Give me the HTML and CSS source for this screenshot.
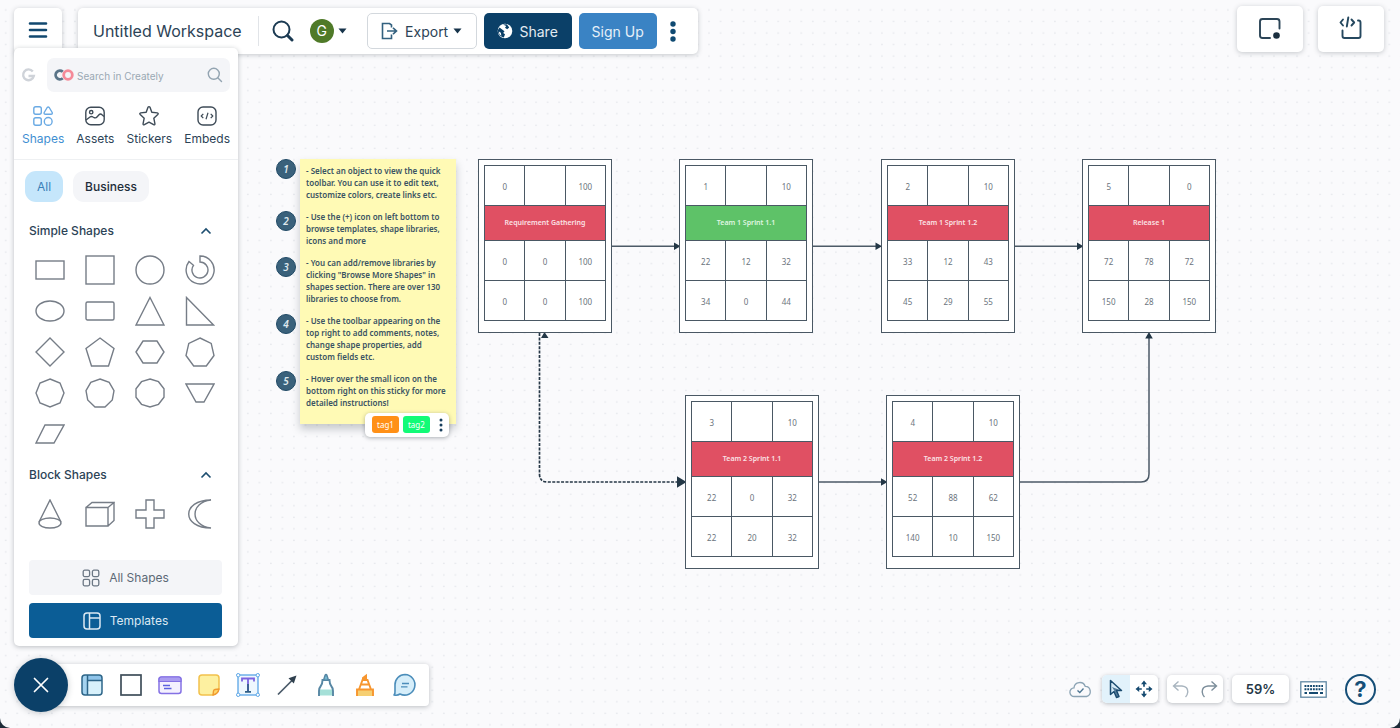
FILE: index.html
```html
<!DOCTYPE html>
<html lang="en">
<head>
<meta charset="utf-8">
<title>Untitled Workspace</title>
<meta name="viewport" content="width=device-width, initial-scale=1">
<link rel="stylesheet" href="styles.css">
</head>
<body>
<div class="app">
  <main class="canvas" aria-label="Canvas">
    <svg class="layer" aria-hidden="true">
      <defs>
        <pattern id="dots" width="11.53" height="11.53" patternUnits="userSpaceOnUse"><circle cx="5.7" cy="10" r="0.8" fill="#e3e5ea"/></pattern>
      </defs>
      <rect width="100%" height="100%" fill="url(#dots)"/>
      <g fill="none" stroke="#4c5a67" stroke-width="1.5">
        <path d="M612 246.2H676M813 246.2H877M1014 246.2H1078M819 482H883"/>
        <path d="M1020 482H1141Q1149 482 1149 474V338"/>
        <path d="M539.5 333V474Q539.5 482 547.5 482H678" stroke="#263746" stroke-width="1.700" stroke-dasharray="3 1.4"/>
      </g>
      <g fill="#233746">
        <path d="M674 242.500L680.500 246.200L674 250ZM875.500 242.500L882 246.200L875.500 250ZM1077 242.500L1083.500 246.200L1077 250ZM881 478.200L887.500 482L881 485.800Z"/>
        <path d="M677 476.300L686.500 482L677 487.700ZM541 338L544.500 332L548.500 338ZM1145.200 338.500L1149 332L1152.800 338.500Z"/>
      </g>
    </svg>

    <section class="sticky">
      <p>- Select an object to view the quick<br>toolbar. You can use it to edit text,<br>customize colors, create links etc.</p>
      <p>- Use the (+) icon on left bottom to<br>browse templates, shape libraries,<br>icons and more</p>
      <p>- You can add/remove libraries by<br>clicking "Browse More Shapes" in<br>shapes section. There are over 130<br>libraries to choose from.</p>
      <p>- Use the toolbar appearing on the<br>top right to add comments, notes,<br>change shape properties, add<br>custom fields etc.</p>
      <p>- Hover over the small icon on the<br>bottom right on this sticky for more<br>detailed instructions!</p>
    </section>
    <span class="badge badge-1">1</span>
    <span class="badge badge-2">2</span>
    <span class="badge badge-3">3</span>
    <span class="badge badge-4">4</span>
    <span class="badge badge-5">5</span>
    <div class="tags">
      <span class="tag tag-orange">tag1</span><span class="tag tag-green">tag2</span>
      <button class="tag-more" aria-label="More tags"><svg width="4" height="14" viewBox="0 0 4 14" fill="#173e5c"><circle cx="2" cy="2" r="1.5"/><circle cx="2" cy="7" r="1.5"/><circle cx="2" cy="12" r="1.5"/></svg></button>
    </div>

    <div class="node node-req"><table class="task">
      <tr><td>0</td><td></td><td>100</td></tr>
      <tr><th colspan="3">Requirement Gathering</th></tr>
      <tr><td>0</td><td>0</td><td>100</td></tr>
      <tr><td>0</td><td>0</td><td>100</td></tr>
    </table></div>
    <div class="node node-t11"><table class="task task-done">
      <tr><td>1</td><td></td><td>10</td></tr>
      <tr><th colspan="3">Team 1 Sprint 1.1</th></tr>
      <tr><td>22</td><td>12</td><td>32</td></tr>
      <tr><td>34</td><td>0</td><td>44</td></tr>
    </table></div>
    <div class="node node-t12"><table class="task">
      <tr><td>2</td><td></td><td>10</td></tr>
      <tr><th colspan="3">Team 1 Sprint 1.2</th></tr>
      <tr><td>33</td><td>12</td><td>43</td></tr>
      <tr><td>45</td><td>29</td><td>55</td></tr>
    </table></div>
    <div class="node node-rel"><table class="task">
      <tr><td>5</td><td></td><td>0</td></tr>
      <tr><th colspan="3">Release 1</th></tr>
      <tr><td>72</td><td>78</td><td>72</td></tr>
      <tr><td>150</td><td>28</td><td>150</td></tr>
    </table></div>
    <div class="node node-t21"><table class="task">
      <tr><td>3</td><td></td><td>10</td></tr>
      <tr><th colspan="3">Team 2 Sprint 1.1</th></tr>
      <tr><td>22</td><td>0</td><td>32</td></tr>
      <tr><td>22</td><td>20</td><td>32</td></tr>
    </table></div>
    <div class="node node-t22"><table class="task">
      <tr><td>4</td><td></td><td>10</td></tr>
      <tr><th colspan="3">Team 2 Sprint 1.2</th></tr>
      <tr><td>52</td><td>88</td><td>62</td></tr>
      <tr><td>140</td><td>10</td><td>150</td></tr>
    </table></div>
  </main>

  <header class="top">
    <div class="top-left">
      <button class="menu" aria-label="Menu"><svg width="20" height="18" viewBox="0 0 20 18" stroke="#11486f" stroke-width="2.600" stroke-linecap="round"><path d="M2 2.500H18M2 9H18M2 15.500H18"/></svg></button>
      <div class="bar">
        <h1 class="title">Untitled Workspace</h1>
        <span class="rule"></span>
        <button class="plain find" aria-label="Search"><svg width="22" height="22" viewBox="0 0 22 22" fill="none" stroke="#1b3a52"><circle cx="9.500" cy="9.500" r="8" stroke-width="2"/><path d="M15.500 15.500L20 20" stroke-width="3" stroke-linecap="round"/></svg></button>
        <button class="plain user" aria-label="Account"><span class="avatar">G</span><svg width="9" height="6" viewBox="0 0 9 6"><path d="M.5 .5H8.500L4.500 5.500Z" fill="#16334a"/></svg></button>
        <button class="btn btn-export"><svg width="17" height="18" viewBox="0 0 17 18" fill="none" stroke="#33617f" stroke-width="1.600"><path d="M10.500 5.500V3L8.500 1.500H1.500V16.500H10.500V12.500M6 9H15.500M12 5.800L15.500 9L12 12.200"/></svg>Export<svg class="caret" width="9" height="6" viewBox="0 0 9 6"><path d="M.5 .5H8.500L4.500 5.500Z" fill="#16334a"/></svg></button>
        <button class="btn btn-share"><svg width="16" height="16" viewBox="0 0 16 16"><circle cx="8" cy="8" r="7.300" fill="#fff"/><path d="M2.500 4.500L7.500 8.200L6.200 10L8 11.200L6.800 14.400C3.200 13.500 .8 11.500 .9 7Z" fill="#0b4068"/><path d="M1.800 8.600L3.800 9.800L4.400 12.800L2.400 11.200Z" fill="#fff"/><path d="M6 1.500L9.200 3L8 4.800L10.200 6.200L12.200 4.600L10.800 2.600L9.500 1.200Z" fill="#0b4068"/></svg>Share</button>
        <button class="btn btn-sign">Sign Up</button>
        <button class="plain more" aria-label="More"><svg width="6" height="21" viewBox="0 0 6 21" fill="#0f4a72"><circle cx="3" cy="3" r="2.700"/><circle cx="3" cy="10.500" r="2.700"/><circle cx="3" cy="18" r="2.700"/></svg></button>
      </div>
    </div>
    <div class="top-right">
      <button class="tile" aria-label="Format panel"><svg width="24" height="24" viewBox="0 0 24 24" fill="none" stroke="#2c4557" stroke-width="1.900" stroke-linecap="round"><path d="M12 21H4.500Q2 21 2 18.500V4.500Q2 2 4.500 2H19Q21.500 2 21.500 4.500V11.500"/><circle cx="18.500" cy="18.500" r="3.300" fill="#1c2f3f" stroke="none"/></svg></button>
      <button class="tile" aria-label="Code panel"><svg width="26" height="26" viewBox="0 0 26 26" fill="none" stroke="#25485f" stroke-width="1.900" stroke-linecap="round" stroke-linejoin="round"><path d="M4.500 14.500V20Q4.500 22 6.500 22H20.500Q22.500 22 22.500 20V6.500Q22.500 4.500 20.500 4.500H20"/><path d="M5 3.500L2.500 6.500L5 9.500M8.800 10.500L10.300 1.500M13.500 3.500L16.200 6.500L13.500 9.500"/></svg></button>
    </div>
  </header>

  <aside class="panel">
    <div class="search-row">
      <svg width="15" height="15" viewBox="0 0 15 15" fill="none" stroke="#cfd3d9" stroke-width="2.400"><path d="M11.800 3.500A5.400 5.400 0 1 0 12.800 8H7.500"/></svg>
      <div class="search">
        <svg width="20" height="12" viewBox="0 0 20 12" fill="none" stroke-width="2.800"><path d="M8.800 2.800A4.300 4.300 0 1 0 8.800 9.200" stroke="#5a7488"/><circle cx="14" cy="6" r="4.300" stroke="#f58a98"/></svg>
        <input class="search-input" type="text" placeholder="Search in Creately" aria-label="Search in Creately">
        <svg width="16" height="16" viewBox="0 0 16 16" fill="none" stroke="#93a4b1" stroke-width="1.400" stroke-linecap="round"><circle cx="6.800" cy="6.800" r="5.500"/><path d="M11 11L14.500 14.500"/></svg>
      </div>
    </div>
    <nav class="tabs">
      <button class="tab tab-on"><svg width="22" height="22" viewBox="0 0 22 22" fill="none" stroke="#6aaae4" stroke-width="1.400" stroke-linejoin="round"><rect x="1.800" y="1.800" width="7.500" height="7.500" rx="2"/><path d="M15.200 2.500Q16.200 1.500 17.200 2.500L20.200 7.500Q20.700 9.300 19 9.300H13.500Q11.700 9.300 12.200 7.500Z"/><rect x="1.800" y="12.700" width="7.500" height="7.500" rx="2"/><circle cx="16.200" cy="16.400" r="3.900"/></svg>Shapes</button>
      <button class="tab"><svg width="22" height="22" viewBox="0 0 22 22" fill="none" stroke="#3e4b57" stroke-width="1.400" stroke-linejoin="round"><rect x="1.800" y="2.200" width="18.400" height="17.600" rx="5"/><circle cx="7.200" cy="7.200" r="1.700"/><path d="M2 15L6 12Q7.500 11 9 12L10.500 12.800Q12 13.200 13.200 11.800L15 9.800Q16.500 8.300 18 9.800L20 11.500"/></svg>Assets</button>
      <button class="tab"><svg width="22" height="22" viewBox="0 0 22 22" fill="none" stroke="#3e4b57" stroke-width="1.400" stroke-linejoin="round"><path d="M10 2.300Q11 1 12 2.300L13.800 7.200L19.300 7.900Q20.800 8.300 19.800 9.500L15.800 13.200L16.900 18.700Q17 20.300 15.600 19.700L11 17.200L6.400 19.700Q5 20.300 5.100 18.700L6.200 13.200L2.200 9.500Q1.200 8.300 2.700 7.900L8.200 7.200Z"/></svg>Stickers</button>
      <button class="tab"><svg width="22" height="22" viewBox="0 0 22 22" fill="none" stroke="#3e4b57" stroke-width="1.400" stroke-linejoin="round"><rect x="2" y="2" width="18" height="18" rx="5"/><path d="M7.300 8.800L5.200 11L7.300 13.200M14.700 8.800L16.800 11L14.700 13.200M12 7.800L10 14.200" stroke-width="1.200"/></svg>Embeds</button>
    </nav>
    <div class="chips">
      <button class="chip chip-on">All</button>
      <button class="chip">Business</button>
    </div>
    <section class="group group-first">
      <button class="group-head">Simple Shapes<svg width="12" height="8" viewBox="0 0 12 8" fill="none" stroke="#1d4e70" stroke-width="1.600"><path d="M1.500 6.500L6 2L10.500 6.500"/></svg></button>
      <div class="shapes">
        <button class="shape" aria-label="Rectangle"><svg viewBox="0 0 30 30"><rect x="1" y="6" width="28" height="18"/></svg></button>
        <button class="shape" aria-label="Square"><svg viewBox="0 0 30 30"><rect x="1" y="1" width="28" height="28"/></svg></button>
        <button class="shape" aria-label="Circle"><svg viewBox="0 0 30 30"><circle cx="15" cy="15" r="14"/></svg></button>
        <button class="shape" aria-label="Arc"><svg viewBox="0 0 30 30"><path d="M15 1A14 14 0 1 1 4 6.500L8.500 10.300A8 8 0 1 0 15 7Z"/></svg></button>
        <button class="shape" aria-label="Ellipse"><svg viewBox="0 0 30 30"><ellipse cx="15" cy="15" rx="14" ry="10"/></svg></button>
        <button class="shape" aria-label="Rounded rectangle"><svg viewBox="0 0 30 30"><rect x="1" y="6" width="28" height="18" rx="1.500"/></svg></button>
        <button class="shape" aria-label="Triangle"><svg viewBox="0 0 30 30"><path d="M15 1.500L29 29H1Z"/></svg></button>
        <button class="shape" aria-label="Right triangle"><svg viewBox="0 0 30 30"><path d="M1.500 1.500L28.500 29H1.500Z"/></svg></button>
        <button class="shape" aria-label="Diamond"><svg viewBox="0 0 30 30"><path d="M15 1L29 15L15 29L1 15Z"/></svg></button>
        <button class="shape" aria-label="Pentagon"><svg viewBox="0 0 30 30"><path d="M15 1L29 11.500L23.500 29H6.500L1 11.500Z"/></svg></button>
        <button class="shape" aria-label="Hexagon"><svg viewBox="0 0 30 30"><path d="M1 15L8 4H22L29 15L22 26H8Z"/></svg></button>
        <button class="shape" aria-label="Heptagon"><svg viewBox="0 0 30 30"><path d="M15 1L26.200 6.400L29 18.500L21.300 29H8.700L1 18.500L3.800 6.400Z"/></svg></button>
        <button class="shape" aria-label="Octagon"><svg viewBox="0 0 30 30"><path d="M15 1L25 5L29 15L25 25L15 29L5 25L1 15L5 5Z"/></svg></button>
        <button class="shape" aria-label="Nonagon"><svg viewBox="0 0 30 30"><path d="M15 1L24.200 4.300L29 12.700L27.300 22L20 29H10L2.700 22L1 12.700L5.800 4.300Z"/></svg></button>
        <button class="shape" aria-label="Decagon"><svg viewBox="0 0 30 30"><path d="M15 1L23.500 3.700L29 10.700V19.300L23.500 26.300L15 29L6.500 26.300L1 19.300V10.700L6.500 3.700Z"/></svg></button>
        <button class="shape" aria-label="Trapezoid"><svg viewBox="0 0 30 30"><path d="M1 6H29L19 24H11Z"/></svg></button>
        <button class="shape" aria-label="Parallelogram"><svg viewBox="0 0 30 30"><path d="M10 6H29L19 24H1Z"/></svg></button>
      </div>
    </section>
    <section class="group">
      <button class="group-head">Block Shapes<svg width="12" height="8" viewBox="0 0 12 8" fill="none" stroke="#1d4e70" stroke-width="1.600"><path d="M1.500 6.500L6 2L10.500 6.500"/></svg></button>
      <div class="shapes">
        <button class="shape" aria-label="Cone"><svg viewBox="0 0 30 30"><path d="M4 23L15 1L26 23"/><ellipse cx="15" cy="24" rx="11" ry="5"/></svg></button>
        <button class="shape" aria-label="Cube"><svg viewBox="0 0 30 30"><path d="M1 8.500H23V27H1ZM1 8.500L7 3.500H29L23 8.500M29 3.500V21.500L23 27"/></svg></button>
        <button class="shape" aria-label="Cross"><svg viewBox="0 0 30 30"><path d="M11 1H19V11H29V19H19V29H11V19H1V11H11Z"/></svg></button>
        <button class="shape" aria-label="Moon"><svg viewBox="0 0 30 30"><path d="M26 1C-3.700 1 -3.700 29 26 29C4.700 27 4.700 3 26 1Z"/></svg></button>
      </div>
    </section>
    <div class="actions">
      <button class="wide wide-all"><svg width="18" height="18" viewBox="0 0 18 18" fill="none" stroke="#6b7784" stroke-width="1.300"><rect x="1.200" y="1.200" width="6.400" height="6.400" rx="1.500"/><rect x="10.400" y="1.200" width="6.400" height="6.400" rx="1.500"/><rect x="1.200" y="10.400" width="6.400" height="6.400" rx="1.500"/><rect x="10.400" y="10.400" width="6.400" height="6.400" rx="1.500"/></svg>All Shapes</button>
      <button class="wide wide-templates"><svg width="18" height="18" viewBox="0 0 18 18" fill="none" stroke="#dce9f3" stroke-width="1.500"><rect x="1" y="1" width="16" height="16" rx="3"/><path d="M6.500 1V17M6.500 6H17"/></svg>Templates</button>
    </div>
  </aside>

  <footer class="bottom">
    <div class="dock">
      <button class="close" aria-label="Close"><svg width="16" height="16" viewBox="0 0 16 16" stroke="#fff" stroke-width="1.700" stroke-linecap="round"><path d="M1.500 1.500L14.500 14.500M14.500 1.500L1.500 14.500"/></svg></button>
      <div class="tools">
        <button class="tool" aria-label="Templates"><svg width="24" height="24" viewBox="0 0 24 24"><rect x="2" y="2" width="20" height="20" rx="3" fill="#d8f1fb"/><path d="M5 2H7.500V22H5Q2 22 2 19V5Q2 2 5 2Z" fill="#a5d3ef"/><path d="M7.500 2H19Q22 2 22 5V7.500H7.500Z" fill="#8fc4ea"/><g fill="none" stroke="#2d6588" stroke-width="1.500"><rect x="2" y="2" width="20" height="20" rx="3"/><path d="M7.500 2V22M7.500 7.500H22"/></g></svg></button>
        <button class="tool" aria-label="Rectangle"><svg width="24" height="24" viewBox="0 0 24 24"><rect x="2" y="2" width="20" height="20" fill="#fff" stroke="#3f4e5a" stroke-width="1.700"/></svg></button>
        <button class="tool" aria-label="Card"><svg width="26" height="24" viewBox="0 0 26 24"><rect x="2" y="4" width="22" height="16.500" rx="2.500" fill="#f4f1fe" stroke="#8471e4" stroke-width="1.500"/><path d="M2 8.500V6.500Q2 4 4.500 4H21.500Q24 4 24 6.500V8.500Z" fill="#aa9cf0" stroke="#8471e4" stroke-width="1.200"/><path d="M6 12.500H13M7 15.500H14.500" stroke="#5b62e0" stroke-width="1.400"/></svg></button>
        <button class="tool" aria-label="Sticky note"><svg width="24" height="24" viewBox="0 0 24 24"><path d="M5 2H19Q22 2 22 5V16L16 22H5Q2 22 2 19V5Q2 2 5 2Z" fill="#fdf0a0" stroke="#f2c14c" stroke-width="1.500"/><path d="M22 16Q21 21 16 22L16.500 18Q16.700 16.700 18 16.500Z" fill="#ffd76a" stroke="#f09a30" stroke-width="1.400" stroke-linejoin="round"/></svg></button>
        <button class="tool" aria-label="Text"><svg width="24" height="24" viewBox="0 0 24 24"><rect x="2" y="2" width="20" height="20" fill="#eef7fe" stroke="#5aa5e6" stroke-width="1.300"/><g fill="#fff" stroke="#5aa5e6"><circle cx="2.200" cy="2.200" r="1.700"/><circle cx="21.800" cy="2.200" r="1.700"/><circle cx="2.200" cy="21.800" r="1.700"/><circle cx="21.800" cy="21.800" r="1.700"/></g><path d="M6 8.500V5.500H18V8.500M12 5.500V18.500" fill="none" stroke="#7c63e0" stroke-width="1.800"/><path d="M12 11V18.500M9 18.800H15" fill="none" stroke="#2f5f86" stroke-width="1.700"/></svg></button>
        <button class="tool" aria-label="Connector"><svg width="24" height="24" viewBox="0 0 24 24"><path d="M3 21.500L17 7.500" stroke="#4a5b69" stroke-width="1.700"/><path d="M21.500 2.500L18.800 10.500L13.500 5.200Z" fill="#2f404e"/></svg></button>
        <button class="tool" aria-label="Marker"><svg width="22" height="24" viewBox="0 0 22 24"><path d="M4 16.500H18V22.500H4Z" fill="#a5e0d8"/><path d="M4 23V18Q4 15 5.800 13Q7.500 10.500 7.500 7H14.500Q14.500 10.500 16.200 13Q18 15 18 18V23M9 6.500L10.200 2.500Q11 1 11.800 2.500L13 6.500" fill="none" stroke="#5787a4" stroke-width="1.900"/><path d="M9.500 6.500L11 2L12.500 6.500Z" fill="#6fb6cf"/></svg></button>
        <button class="tool" aria-label="Highlighter"><svg width="22" height="24" viewBox="0 0 22 24"><path d="M3 16.500H19V23H3Z" fill="#f6cf72"/><path d="M3 23V16.500H19V23M5 16.500L8.500 7H13.500L17 16.500M6.800 11.500H15.200" fill="none" stroke="#f7962f" stroke-width="1.900"/><path d="M8 7.500V4.500L13 .8V7.500Z" fill="#f7962f"/></svg></button>
        <button class="tool" aria-label="Comment"><svg width="26" height="26" viewBox="0 0 26 26"><path d="M14 2.500A10.300 10.300 0 1 1 9 22Q6.500 23.800 3 23Q4.300 21.500 4 19V12.800A10 10.300 0 0 1 14 2.500Z" fill="#d6eefa" stroke="#4b8dba" stroke-width="1.600" stroke-linejoin="round"/><path d="M11 11.500H18M10 14.800H16.500" stroke="#4b8dba" stroke-width="1.300"/></svg></button>
      </div>
    </div>
    <div class="status">
      <svg class="cloud" width="23" height="17" viewBox="0 0 23 17" fill="none" stroke="#8ba3b4" stroke-width="1.300"><path d="M5.500 15.500A4.300 4.300 0 0 1 5 6.800A5.800 5.800 0 0 1 16.200 5.300A5.200 5.200 0 0 1 17.500 15.500Z"/><path d="M8.500 9.500L10.800 11.500L14.500 7.500" stroke="#4d7592"/></svg>
      <div class="pair">
        <button class="key key-on" aria-label="Select"><svg width="16" height="20" viewBox="0 0 16 20"><path d="M2.500 1.500V15.500L6 12.500L8.500 18.500L11 17.500L8.500 11.500H13.500Z" fill="#d7ecf8" stroke="#1c4c70" stroke-width="1.500" stroke-linejoin="round"/><path d="M6.500 12L8.500 18.500L11 17.500L8.500 11.500H13L4 8Z" fill="#1c4c70" opacity=".7"/></svg></button>
        <button class="key" aria-label="Pan"><svg width="18" height="18" viewBox="0 0 18 18" fill="#164a70" stroke="#164a70"><path d="M9 .5L12 4.200H6ZM9 17.500L12 13.800H6ZM.5 9L4.200 6V12ZM17.500 9L13.800 6V12Z" stroke="none"/><path d="M9 3V6.800M9 11.200V15M3 9H6.800M11.200 9H15" stroke-width="1.700"/></svg></button>
      </div>
      <div class="pair">
        <button class="key" aria-label="Undo"><svg width="18" height="18" viewBox="0 0 18 18" fill="none" stroke="#a9b5bf" stroke-width="1.400"><path d="M6.500 1.500L1.500 6L6.500 10.500M1.500 6H10Q16 6.500 15.800 12Q15.500 15 13.500 17"/></svg></button>
        <button class="key" aria-label="Redo"><svg width="18" height="18" viewBox="0 0 18 18" fill="none" stroke="#7d8e9b" stroke-width="1.400"><path d="M11.500 1.500L16.500 6L11.500 10.500M16.500 6H8Q2 6.500 2.200 12Q2.500 15 4.500 17"/></svg></button>
      </div>
      <button class="zoom">59%</button>
      <button class="plain keyboard" aria-label="Keyboard shortcuts"><svg width="27" height="17" viewBox="0 0 27 17"><rect x=".8" y=".8" width="25.400" height="15.400" fill="#fff" stroke="#5f87a3" stroke-width="1.300"/><path d="M4.500 5H23M4.500 8.300H23" stroke="#164a70" stroke-width="1.900" stroke-dasharray="1.900 .9"/><path d="M4.500 12H7M9 12H18M20 12H23" stroke="#164a70" stroke-width="1.900"/></svg></button>
      <button class="plain help" aria-label="Help">?</button>
    </div>
  </footer>
</div>
</body>
</html>
```
FILE: styles.css
```css
* { box-sizing: border-box; }
body {
  margin: 0;
  background: #1d2b38;
  font-family: Inter, "Liberation Sans", sans-serif;
  color: #2c4356;
}
button {
  margin: 0;
  padding: 0;
  border: 0;
  background: none;
  font: inherit;
  color: inherit;
  cursor: pointer;
}
svg { display: block; flex: none; }

.app {
  position: relative;
  display: flex;
  flex-direction: column;
  min-height: 100vh;
  overflow: hidden;
  background: #fafafc;
  border-radius: 0 0 10px 10px;
}

/* Canvas */
.canvas { position: absolute; inset: 0; font-family: "Noto Sans", sans-serif; }
.layer { position: absolute; inset: 0; width: 100%; height: 100%; }

.sticky {
  position: absolute;
  left: 300px;
  top: 159px;
  width: 156px;
  height: 265px;
  padding: 6px;
  background: #fffab5;
  box-shadow: 0 5px 8px rgba(40, 50, 60, .25);
  font-size: 8px;
  font-weight: 600;
  line-height: 12px;
  color: #3a5363;
  white-space: nowrap;
}
.sticky p { margin: 0 0 10px; }

.badge {
  position: absolute;
  left: 276px;
  width: 20px;
  height: 20px;
  border: 1px solid #214a66;
  border-radius: 50%;
  background: #3a617b;
  color: #dfe8ee;
  font-size: 10px;
  font-style: italic;
  font-weight: 600;
  line-height: 18px;
  text-align: center;
}
.badge-1 { top: 159px; }
.badge-2 { top: 211px; }
.badge-3 { top: 257px; }
.badge-4 { top: 314px; }
.badge-5 { top: 371px; }

.tags {
  position: absolute;
  left: 365px;
  top: 413px;
  display: flex;
  align-items: center;
  gap: 4px;
  padding: 3px 6px 4px 7px;
  border-radius: 5px;
  background: #fff;
  box-shadow: 0 1px 4px rgba(30, 40, 50, .35);
}
.tag {
  padding: 0 5px;
  border-radius: 3px;
  color: #fff;
  font-size: 8px;
  line-height: 17px;
}
.tag-orange { background: #ff9016; }
.tag-green { background: #12fb77; }
.tag-more { padding: 0 0 0 5px; }

.node {
  position: absolute;
  padding: 5px 5px 11px;
  border: 1px solid #4a5864;
  background: #fff;
}
.node-req { left: 478px; top: 159px; }
.node-t11 { left: 679px; top: 159px; }
.node-t12 { left: 881px; top: 159px; }
.node-rel { left: 1082px; top: 159px; }
.node-t21 { left: 685px; top: 395px; }
.node-t22 { left: 886px; top: 395px; }

.task {
  width: 122px;
  border-collapse: collapse;
  table-layout: fixed;
  font-size: 8px;
  line-height: 12px;
  color: #6b747d;
  text-align: center;
}
.task td { height: 40px; padding: 2px 0 0; border: 1px solid #4a5864; }
.task th {
  height: 35px;
  padding: 0;
  border: 1px solid #4a5864;
  background: #e05063;
  color: #fbe3e6;
  font-size: 7px;
  font-weight: 600;
}
.task-done th { background: #5ec268; color: #e0f7e3; }

/* Top bar */
.top {
  position: relative;
  display: flex;
  justify-content: space-between;
  align-items: flex-start;
  padding: 6px 16px 0 14px;
}
.top-left { display: flex; gap: 16px; padding-top: 2px; }
.top-right { display: flex; gap: 15px; }
.menu, .bar, .tile {
  height: 46px;
  border-radius: 5px;
  background: #fff;
  box-shadow: 0 1px 5px rgba(40, 50, 60, .25);
}
.menu { display: grid; place-items: center; width: 48px; padding-bottom: 3px; }
.tile { display: grid; place-items: center; width: 66px; }
.bar { display: flex; align-items: center; padding: 0 22px 0 15px; }
.title { margin: 0; font-size: 16px; font-weight: 400; line-height: 24px; white-space: nowrap; }
.rule { width: 1px; height: 30px; margin: 0 13px 0 16px; background: #e1e4e8; }
.user { display: flex; align-items: center; gap: 4px; margin: 0 20px 0 16px; }
.avatar {
  width: 24px;
  height: 24px;
  border-radius: 50%;
  background: #4f7a28;
  color: #fff;
  font-size: 14px;
  line-height: 24px;
}
.btn {
  display: flex;
  align-items: center;
  justify-content: center;
  height: 36px;
  margin-right: 7px;
  border-radius: 5px;
  font-size: 14px;
  white-space: nowrap;
}
.btn-export { gap: 7px; width: 110px; border: 1px solid #d3d8dd; }
.caret { margin-left: -2px; }
.btn-share { gap: 6px; width: 88px; background: #0b4068; color: #e3ebf1; }
.btn-sign { width: 78px; background: #3a83c4; color: #e6f0f8; }
.more { margin-left: 6px; }

/* Shape library */
.panel {
  position: relative;
  width: 224px;
  margin: -6px 0 12px 14px;
  padding: 10px 0 8px;
  border-radius: 5px;
  background: #fff;
  box-shadow: 0 1px 5px rgba(40, 50, 60, .3);
}
.search-row { display: flex; align-items: center; gap: 11px; padding: 0 8px 0 7px; }
.search {
  display: flex;
  flex: 1;
  align-items: center;
  min-width: 0;
  height: 34px;
  padding: 0 7px;
  border-radius: 7px;
  background: #f4f5f8;
}
.search-input {
  flex: 1;
  min-width: 0;
  padding: 2px 3px 0;
  border: 0;
  outline: 0;
  background: none;
  font: 10px/14px Inter, "Liberation Sans", sans-serif;
}
.search-input::placeholder { color: #9aa8b3; opacity: 1; }
.tabs {
  display: flex;
  justify-content: space-between;
  padding: 13px 8px 12px;
  border-bottom: 1px solid #eef0f2;
}
.tab { display: flex; flex-direction: column; align-items: center; gap: 4px; font-size: 12px; line-height: 16px; }
.tab-on { color: #3f8fd2; }
.chips { display: flex; gap: 10px; padding: 11px 11px 0; }
.chip {
  padding: 0 12px;
  border-radius: 11px;
  background: #f4f5f8;
  color: #1f2d3a;
  font-size: 12px;
  font-weight: 500;
  line-height: 31px;
}
.chip-on { background: #c5e6fb; color: #3a7fb8; font-weight: 400; }
.group { margin-top: 11px; padding: 0 11px; }
.group-first { margin-top: 19px; }
.group-head {
  display: flex;
  align-items: center;
  justify-content: space-between;
  width: 100%;
  margin-bottom: 8px;
  padding: 0 15px 0 4px;
  font-size: 12px;
  font-weight: 500;
  line-height: 20px;
}
.shapes { display: grid; grid-template-columns: repeat(4, 50px); }
.shape { display: grid; place-items: center; height: 41px; }
.shape svg { width: 30px; height: 30px; fill: #fff; stroke: #767d87; stroke-width: 1.4px; }
.actions { display: grid; gap: 8px; padding: 26px 16px 0 15px; }
.wide {
  display: flex;
  align-items: center;
  justify-content: center;
  gap: 9px;
  height: 35px;
  border-radius: 4px;
  font-size: 12px;
}
.wide-all { background: #f4f5f8; color: #5c6976; }
.wide-templates { background: #0b5d96; color: #dce9f3; }

/* Bottom bar */
.bottom {
  position: relative;
  display: flex;
  justify-content: space-between;
  align-items: center;
  margin-top: auto;
  padding: 0 24px 16px 14px;
}
.dock { display: flex; align-items: center; }
.close {
  position: relative;
  display: grid;
  place-items: center;
  width: 54px;
  height: 54px;
  border-radius: 50%;
  background: #0b4068;
  box-shadow: 0 1px 6px rgba(40, 50, 60, .25);
}
.tools {
  display: flex;
  margin-left: -27px;
  padding: 0 6px 0 31px;
  border-radius: 4px;
  background: #fff;
  box-shadow: 0 1px 5px rgba(40, 50, 60, .3);
}
.tool { display: grid; place-items: center; width: 39px; height: 42px; }
.status { display: flex; align-items: center; padding-top: 8px; }
.cloud { margin-right: 10px; }
.pair, .zoom {
  display: flex;
  overflow: hidden;
  margin-right: 9px;
  border-radius: 5px;
  background: #fff;
  box-shadow: 0 1px 4px rgba(40, 50, 60, .3);
}
.key { display: grid; place-items: center; width: 28px; height: 28px; }
.key-on { background: #e2f2fb; }
.zoom {
  align-items: center;
  justify-content: center;
  width: 57px;
  height: 28px;
  margin-right: 11px;
  color: #253746;
  font-size: 13px;
  font-weight: 600;
}
.keyboard { margin-right: 18px; }
.help {
  width: 31px;
  height: 31px;
  border: 2px solid #164f78;
  border-radius: 50%;
  color: #164f78;
  font-size: 22px;
  font-weight: 700;
  line-height: 27px;
}
```
